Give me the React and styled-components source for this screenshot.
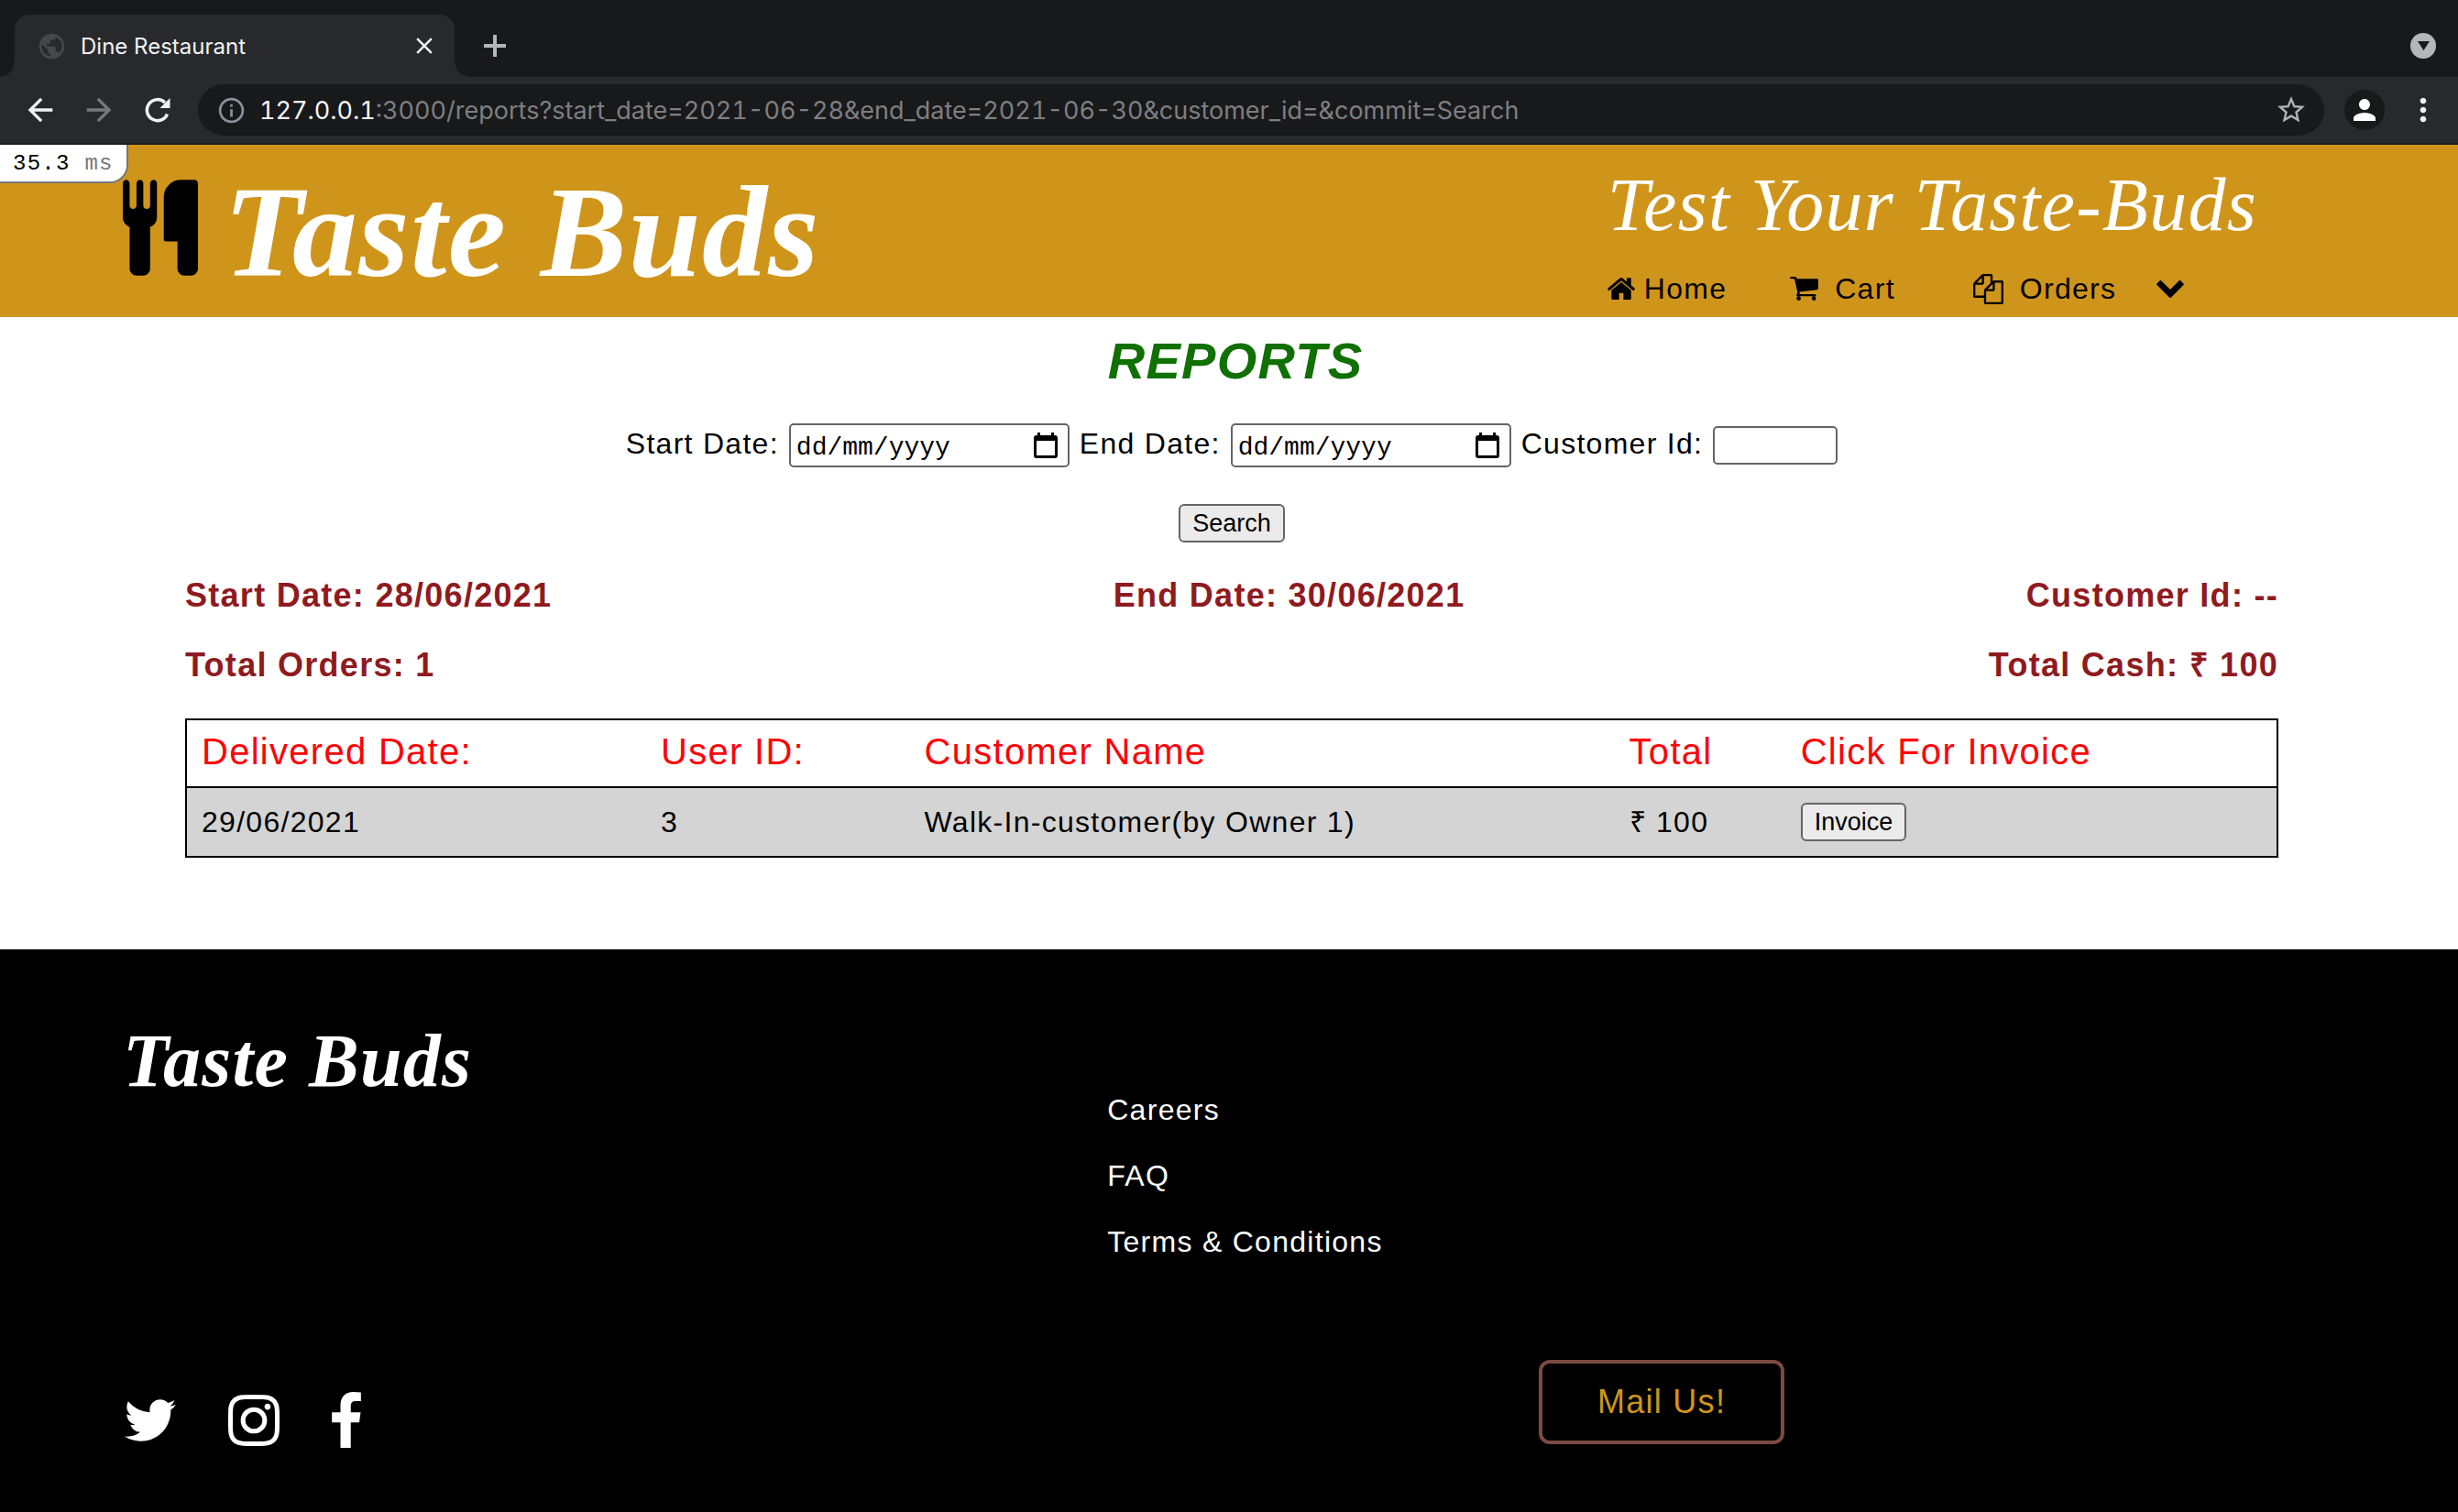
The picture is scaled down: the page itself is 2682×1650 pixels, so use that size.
import React from "react";
import styled, { createGlobalStyle } from "styled-components";
import {
  MdArrowBack,
  MdArrowForward,
  MdClose,
  MdInfoOutline,
  MdMoreVert,
  MdPerson,
  MdPublic,
  MdStarBorder,
} from "react-icons/md";

const colors = {
  strip: "#18191b",
  toolbar: "#28292d",
  brand: "#cf951b",
  maroon: "#8f1a20",
  green: "#107003",
  red: "#ff0008",
  control: "#656567",
  controlFill: "#ebebeb",
  stripe: "#d4d4d4",
  mail: "#7c4a42",
};

const sans = '"Liberation Sans", Arial, Helvetica, sans-serif';
const mono = '"Liberation Mono", "Courier New", monospace';
const script = '"Liberation Serif", "Times New Roman", serif';
const ui = 'Inter, Roboto, sans-serif';

const GlobalStyle = createGlobalStyle`
  *, *::before, *::after { box-sizing: border-box; }
  body { margin: 0; background: #fff; color: #000; font-family: ${sans}; font-size: 32px; }
  h1, h2, p, ul { margin: 0; padding: 0; }
  svg { display: block; flex: none; }
`;

const Window = styled.div`
  display: flex;
  flex-direction: column;
  min-height: 100vh;
`;

/* ---------- browser frame ---------- */

const TabStrip = styled.div`
  display: flex;
  align-items: center;
  padding: 16px 24px 0 16px;
  background: ${colors.strip};
`;

const Tab = styled.div`
  position: relative;
  display: flex;
  align-items: center;
  gap: 15px;
  width: 480px;
  height: 68px;
  padding: 0 18px 0 24px;
  border-radius: 16px 16px 0 0;
  background: ${colors.toolbar};
  color: #f1f1f2;
  font: 400 24px ${ui};

  &::before,
  &::after {
    content: "";
    position: absolute;
    bottom: 0;
    width: 16px;
    height: 16px;
  }
  &::before {
    right: 100%;
    background: radial-gradient(circle at 0 0, transparent 15px, ${colors.toolbar} 16px);
  }
  &::after {
    left: 100%;
    background: radial-gradient(circle at 100% 0, transparent 15px, ${colors.toolbar} 16px);
  }
`;

const TabTitle = styled.span`
  flex: 1;
`;

const IconButton = styled.button`
  display: flex;
  align-items: center;
  justify-content: center;
  width: ${(p) => p.$size || 32}px;
  height: ${(p) => p.$size || 32}px;
  flex: none;
  padding: 0;
  border: 0;
  border-radius: 50%;
  background: ${(p) => p.$fill || "transparent"};
  color: ${(p) => p.$color || "#f1f1f2"};
`;

const NewTab = styled(IconButton)`
  margin-left: 28px;
`;

const TabSearch = styled(IconButton)`
  margin-left: auto;
`;

const Toolbar = styled.div`
  display: flex;
  align-items: center;
  gap: 22px;
  padding: 8px 18px 8px 24px;
  border-bottom: 2px solid #1c1d1f;
  background: ${colors.toolbar};
`;

const NavButtons = styled.div`
  display: flex;
  gap: 24px;
  padding-right: 2px;
`;

const Omnibox = styled.div`
  display: flex;
  align-items: center;
  flex: 1;
  gap: 14px;
  height: 56px;
  padding: 0 18px 0 20px;
  border-radius: 28px;
  background: ${colors.strip};
  color: #7e7f81;
  font: 400 27px ${ui};
  font-variant-numeric: tabular-nums;
`;

const Url = styled.span`
  flex: 1;
  white-space: nowrap;
`;

const Host = styled.span`
  color: #f5f5f6;
`;

/* ---------- page ---------- */

const Page = styled.div`
  position: relative;
  display: flex;
  flex: 1;
  flex-direction: column;
  letter-spacing: 0.04em;
`;

const ProfilerBadge = styled.div`
  position: absolute;
  top: 0;
  left: 0;
  padding: 6px 14px 4px;
  border: solid #777;
  border-width: 0 2px 2px 0;
  border-radius: 0 0 20px 0;
  background: #fff;
  font: 24px/30px ${mono};
`;

const Unit = styled.span`
  color: #777;
`;

const Header = styled.header`
  display: grid;
  grid-template-columns: 67.1% 1fr;
  padding: 0 5%;
  background: ${colors.brand};
`;

const Brand = styled.a`
  display: flex;
  align-items: baseline;
  gap: 28px;
  padding-top: 15px;
  color: #fff;
  text-decoration: none;
`;

const Wordmark = styled.span`
  font: italic 700 ${(p) => p.$size}px/${(p) => p.$line}px ${script};
  color: #fff;
  white-space: nowrap;
`;

const HeaderSide = styled.div`
  display: flex;
  flex-direction: column;
  gap: 27px;
  padding: 20px 0 13px;
`;

const Tagline = styled.p`
  color: #fff;
  font: italic 400 82px/92px ${script};
  white-space: nowrap;
`;

const Nav = styled.nav`
  display: flex;
  align-items: center;
`;

const NavLink = styled.a`
  display: flex;
  align-items: center;
  gap: ${(p) => p.$gap}px;
  margin-right: ${(p) => p.$after}px;
  color: #000;
  line-height: 36px;
  text-decoration: none;
`;

const Main = styled.main`
  display: flex;
  flex-direction: column;
  padding: 16px 196px 100px 202px;
`;

const Title = styled.h1`
  padding-left: 8px;
  color: ${colors.green};
  font: italic 700 56px/64px ${sans};
  text-align: center;
`;

const SearchForm = styled.form`
  display: flex;
  flex-direction: column;
  align-items: center;
  gap: 40px;
  margin: 36px 0;
`;

const Fields = styled.div`
  display: flex;
  align-items: center;
  gap: 11px;
`;

const Label = styled.label`
  padding-bottom: 4px;
  line-height: 36px;
`;

const DateBox = styled.div`
  display: flex;
  align-items: center;
  width: 306px;
  height: 48px;
  padding: 0 10px 0 6px;
  border: 2px solid ${colors.control};
  border-radius: 5px;
`;

const DateInput = styled.input`
  flex: 1;
  min-width: 0;
  padding: 4px 0 0;
  border: 0;
  outline: 0;
  background: transparent;
  font: 28px ${mono};
  &::placeholder {
    color: #000;
    opacity: 1;
  }
`;

const CustomerInput = styled.input`
  width: 136px;
  height: 42px;
  padding: 0 4px;
  border: 2px solid ${colors.control};
  border-radius: 5px;
  font: 27px ${sans};
`;

const Button = styled.button`
  height: 42px;
  padding: 0 13px;
  border: 2px solid ${colors.control};
  border-radius: 6px;
  background: ${colors.controlFill};
  color: #000;
  font: 27px ${sans};
`;

const Summary = styled.div`
  display: flex;
  justify-content: space-between;
  margin-bottom: ${(p) => p.$after}px;
  color: ${colors.maroon};
  font-weight: 700;
  font-size: 36px;
  line-height: 44px;
`;

const Table = styled.table`
  width: 100%;
  table-layout: fixed;
  border: 2px solid #000;
  border-collapse: collapse;
`;

const HeadCell = styled.th`
  height: 74px;
  padding: 0 16px 4px;
  border-bottom: 2px solid #000;
  color: ${colors.red};
  font-weight: 400;
  font-size: 40px;
  text-align: left;
`;

const Cell = styled.td`
  height: 76px;
  padding: 0 16px;
  background: ${colors.stripe};
  line-height: 36px;
`;

const Footer = styled.footer`
  flex: 1;
  padding: 74px 5% 70px;
  background: #000;
`;

const FooterRow = styled.div`
  display: grid;
  grid-template-columns: ${(p) => p.$lead} 1fr;
  align-items: ${(p) => p.$align || "start"};
`;

const Links = styled.ul`
  display: flex;
  flex-direction: column;
  gap: 32px;
  padding: 81px 0 109px;
  list-style: none;
`;

const FooterLink = styled.a`
  display: block;
  color: #fff;
  line-height: 40px;
  text-decoration: none;
`;

const Social = styled.div`
  display: flex;
  align-items: center;
  gap: 57px;
  padding-left: 2px;
`;

const SocialLink = styled.a`
  color: #fff;
`;

const MailLink = styled.a`
  justify-self: start;
  margin-bottom: 4px;
  padding: 22px 60px;
  border: 4px solid ${colors.mail};
  border-radius: 12px;
  color: ${colors.brand};
  font-size: 36px;
  line-height: 40px;
  text-decoration: none;
`;

/* ---------- icons ---------- */

const glyphs = {
  cutlery: {
    box: "192 0 1408 1792",
    w: 82,
    h: 105,
    d: "M832 64v640q0 61-35.5 111t-92.5 70v779q0 52-38 90t-90 38h-128q-52 0-90-38t-38-90v-779q-57-20-92.5-70t-35.5-111v-640q0-26 19-45t45-19 45 19 19 45v416q0 26 19 45t45 19 45-19 19-45v-416q0-26 19-45t45-19 45 19 19 45v416q0 26 19 45t45 19 45-19 19-45v-416q0-26 19-45t45-19 45 19 19 45zm768 0v1600q0 52-38 90t-90 38h-128q-52 0-90-38t-38-90v-512h-224q-13 0-22.5-9.5t-9.5-22.5v-800q0-132 94-226t226-94h256q26 0 45 19t19 45z",
  },
  home: {
    box: "89 250 1614 1286",
    w: 30,
    h: 24,
    d: "M1472 992v480q0 26-19 45t-45 19h-384v-384h-256v384h-384q-26 0-45-19t-19-45v-480q0-1 .5-3t.5-3l575-474 575 474q1 2 1 6zm223-69l-62 74q-8 9-21 11h-3q-13 0-21-7l-692-577-692 577q-12 8-24 7-13-2-21-11l-62-74q-8-10-7-23.5t11-21.5l719-599q32-26 76-26t76 26l244 204v-195q0-14 9-23t23-9h192q14 0 23 9t9 23v408l219 182q10 8 11 21.5t-7 23.5z",
  },
  cart: {
    box: "64 256 1664 1408",
    w: 31,
    h: 26,
    d: "M704 1536q0 52-38 90t-90 38-90-38-38-90 38-90 90-38 90 38 38 90zm896 0q0 52-38 90t-90 38-90-38-38-90 38-90 90-38 90 38 38 90zm128-1088v512q0 24-16.5 42.5t-40.5 21.5l-1044 122q13 60 13 70 0 16-24 64h920q26 0 45 19t19 45-19 45-45 19h-1024q-26 0-45-19t-19-45q0-11 8-31.5t16-36 21.5-40 15.5-29.5l-177-823h-204q-26 0-45-19t-19-45 19-45 45-19h256q16 0 28.5 6.5t19.5 15.5 13 24.5 8 26 5.5 29.5 4.5 26h1201q26 0 45 19t19 45z",
  },
  files: {
    box: "0 0 1792 1792",
    w: 33,
    h: 33,
    d: "M1696 384q40 0 68 28t28 68v1216q0 40-28 68t-68 28h-960q-40 0-68-28t-28-68v-288h-544q-40 0-68-28t-28-68v-672q0-40 20-88t48-76l408-408q28-28 76-48t88-20h416q40 0 68 28t28 68v328q68-40 128-40h416zm-544 213l-299 299h299v-299zm-640-384l-299 299h299v-299zm196 647l316-316v-416h-384v416q0 40-28 68t-68 28h-416v640h512v-256q0-40 20-88t48-76zm956 804v-1152h-384v416q0 40-28 68t-68 28h-416v640h896z",
  },
  chevron: {
    box: "90 533 1612 1035",
    w: 30,
    h: 19,
    d: "M1683 808l-742 741q-19 19-45 19t-45-19l-742-741q-19-19-19-45.5t19-45.5l166-165q19-19 45-19t45 19l531 531 531-531q19-19 45-19t45 19l166 165q19 19 19 45.5t-19 45.5z",
  },
  twitter: {
    box: "108 256 1576 1280",
    w: 56,
    h: 46,
    d: "M1684 408q-67 98-162 167 1 14 1 42 0 130-38 259.5t-115.5 248.5-184.5 210.5-258 146-323 54.5q-271 0-496-145 35 4 78 4 225 0 401-138-105-2-188-64.5t-114-159.5q33 5 61 5 43 0 85-11-112-23-185.5-111.5t-73.5-205.5v-4q68 38 146 41-66-44-105-115t-39-154q0-88 44-163 121 149 294.5 238.5t371.5 99.5q-8-38-8-74 0-134 94.5-228.5t228.5-94.5q140 0 236 102 109-21 205-78-37 115-142 178 93-10 186-50z",
  },
  instagram: {
    box: "128 128 1536 1536",
    w: 56,
    h: 56,
    d: "M1152 896q0-106-75-181t-181-75-181 75-75 181 75 181 181 75 181-75 75-181zm138 0q0 164-115 279t-279 115-279-115-115-279 115-279 279-115 279 115 115 279zm108-410q0 38-27 65t-65 27-65-27-27-65 27-65 65-27 65 27 27 65zm-502-220q-7 0-76.5-.5t-105.5 0-96.5 3-103 10-71.5 18.5q-50 20-88 58t-58 88q-11 29-18.5 71.5t-10 103-3 96.5 0 105.5.5 76.5-.5 76.5 0 105.5 3 96.5 10 103 18.5 71.5q20 50 58 88t88 58q29 11 71.5 18.5t103 10 96.5 3 105.5 0 76.5-.5 76.5.5 105.5 0 96.5-3 103-10 71.5-18.5q50-20 88-58t58-88q11-29 18.5-71.5t10-103 3-96.5 0-105.5-.5-76.5.5-76.5 0-105.5-3-96.5-10-103-18.5-71.5q-20-50-58-88t-88-58q-29-11-71.5-18.5t-103-10-96.5-3-105.5 0-76.5.5zm768 630q0 229-5 317-10 208-124 322t-322 124q-88 5-317 5t-317-5q-208-10-322-124t-124-322q-5-88-5-317t5-317q10-208 124-322t322-124q88-5 317-5t317 5q208 10 322 124t124 322q5 88 5 317z",
  },
  facebook: {
    box: "479 0 864 1664",
    w: 32,
    h: 61,
    d: "M1343 12v264h-157q-86 0-116 36t-30 108v189h293l-39 296h-254v759h-306v-759h-255v-296h255v-218q0-186 104-288.5t277-102.5q147 0 228 12z",
  },
};

function Glyph({ name, color = "currentColor" }) {
  const g = glyphs[name];
  return (
    <svg width={g.w} height={g.h} viewBox={g.box} fill={color} aria-hidden="true">
      <path d={g.d} />
    </svg>
  );
}

function PlusIcon() {
  return (
    <svg width="24" height="24" viewBox="0 0 24 24" stroke="currentColor" strokeWidth="4" aria-hidden="true">
      <path d="M12 0v24M0 12h24" />
    </svg>
  );
}

function ReloadIcon() {
  return (
    <svg width="28" height="28" viewBox="0 0 28 28" fill="none" aria-hidden="true">
      <path d="M24.5 18.5A11.5 11.5 0 1 1 22 6" stroke="currentColor" strokeWidth="3.5" />
      <path d="M27.5 1v11h-11z" fill="currentColor" />
    </svg>
  );
}

function TriangleIcon() {
  return (
    <svg width="13" height="10" viewBox="0 0 13 10" fill="currentColor" aria-hidden="true">
      <path d="M0 0h13L6.5 10z" />
    </svg>
  );
}

function CalendarIcon() {
  return (
    <svg width="26" height="28" viewBox="0 0 26 28" aria-hidden="true">
      <path
        fillRule="evenodd"
        d="M4 0h3v3h12V0h3v3h1a3 3 0 0 1 3 3v19a3 3 0 0 1-3 3H3a3 3 0 0 1-3-3V6a3 3 0 0 1 3-3h1zM3 9v16h20V9z"
      />
    </svg>
  );
}

function DateField({ id, label }) {
  return (
    <>
      <Label htmlFor={id}>{label}</Label>
      <DateBox>
        <DateInput id={id} name={id} type="text" placeholder="dd/mm/yyyy" />
        <IconButton type="button" aria-label={`Pick ${label}`} $size={28} $color="#000">
          <CalendarIcon />
        </IconButton>
      </DateBox>
    </>
  );
}

const columns = [
  { title: "Delivered Date:", width: "22%" },
  { title: "User ID:", width: "12.6%" },
  { title: "Customer Name", width: "33.7%" },
  { title: "Total", width: "8.2%" },
  { title: "Click For Invoice", width: "auto" },
];

const orders = [
  { date: "29/06/2021", user: "3", customer: "Walk-In-customer(by Owner 1)", total: "₹ 100" },
];

const footerLinks = ["Careers", "FAQ", "Terms & Conditions"];
const socials = ["twitter", "instagram", "facebook"];

export default function App() {
  return (
    <Window>
      <GlobalStyle />
      <TabStrip>
        <Tab>
          <MdPublic size={33} color="#46474b" />
          <TabTitle>Dine Restaurant</TabTitle>
          <IconButton aria-label="Close tab" $size={30}>
            <MdClose size={30} />
          </IconButton>
        </Tab>
        <NewTab aria-label="New tab" $color="#b4b6ba">
          <PlusIcon />
        </NewTab>
        <TabSearch aria-label="Search tabs" $size={28} $fill="#b4b6ba" $color={colors.strip}>
          <TriangleIcon />
        </TabSearch>
      </TabStrip>
      <Toolbar>
        <NavButtons>
          <IconButton aria-label="Back" $size={40}>
            <MdArrowBack size={40} />
          </IconButton>
          <IconButton aria-label="Forward" $size={40} $color="#77787a">
            <MdArrowForward size={40} />
          </IconButton>
          <IconButton aria-label="Reload" $size={40}>
            <ReloadIcon />
          </IconButton>
        </NavButtons>
        <Omnibox>
          <MdInfoOutline size={33} color="#87909a" />
          <Url>
            <Host>127.0.0.1</Host>
            :3000/reports?start_date=2021-06-28&amp;end_date=2021-06-30&amp;customer_id=&amp;commit=Search
          </Url>
          <IconButton aria-label="Bookmark" $size={36} $color="#b0b1b3">
            <MdStarBorder size={36} />
          </IconButton>
        </Omnibox>
        <IconButton aria-label="Profile" $size={44} $fill={colors.strip} $color="#fff">
          <MdPerson size={36} />
        </IconButton>
        <IconButton aria-label="Menu" $size={40}>
          <MdMoreVert size={40} />
        </IconButton>
      </Toolbar>

      <Page>
        <Header>
          <Brand href="#home">
            <Glyph name="cutlery" color="#000" />
            <Wordmark $size={142} $line={160}>Taste Buds</Wordmark>
          </Brand>
          <HeaderSide>
            <Tagline>Test Your Taste-Buds</Tagline>
            <Nav>
              <NavLink href="#home" $gap={10} $after={69}>
                <Glyph name="home" />
                Home
              </NavLink>
              <NavLink href="#cart" $gap={18} $after={85}>
                <Glyph name="cart" />
                Cart
              </NavLink>
              <NavLink href="#orders" $gap={18} $after={44}>
                <Glyph name="files" />
                Orders
              </NavLink>
              <Glyph name="chevron" />
            </Nav>
          </HeaderSide>
        </Header>
        <ProfilerBadge>
          35.3 <Unit>ms</Unit>
        </ProfilerBadge>

        <Main>
          <Title>REPORTS</Title>
          <SearchForm onSubmit={(e) => e.preventDefault()}>
            <Fields>
              <DateField id="start_date" label="Start Date:" />
              <DateField id="end_date" label="End Date:" />
              <Label htmlFor="customer_id">Customer Id:</Label>
              <CustomerInput id="customer_id" name="customer_id" type="text" />
            </Fields>
            <Button type="submit">Search</Button>
          </SearchForm>

          <Summary $after={32}>
            <span>Start Date: 28/06/2021</span>
            <span>End Date: 30/06/2021</span>
            <span>Customer Id: --</span>
          </Summary>
          <Summary $after={36}>
            <span>Total Orders: 1</span>
            <span>Total Cash: ₹ 100</span>
          </Summary>

          <Table>
            <colgroup>
              {columns.map((c) => (
                <col key={c.title} width={c.width} />
              ))}
            </colgroup>
            <thead>
              <tr>
                {columns.map((c) => (
                  <HeadCell key={c.title} scope="col">{c.title}</HeadCell>
                ))}
              </tr>
            </thead>
            <tbody>
              {orders.map((o) => (
                <tr key={o.date}>
                  <Cell>{o.date}</Cell>
                  <Cell>{o.user}</Cell>
                  <Cell>{o.customer}</Cell>
                  <Cell>{o.total}</Cell>
                  <Cell>
                    <Button type="button">Invoice</Button>
                  </Cell>
                </tr>
              ))}
            </tbody>
          </Table>
        </Main>

        <Footer>
          <FooterRow $lead="44.5%">
            <Wordmark $size={82} $line={96}>Taste Buds</Wordmark>
            <Links>
              {footerLinks.map((text) => (
                <li key={text}>
                  <FooterLink href="#info">{text}</FooterLink>
                </li>
              ))}
            </Links>
          </FooterRow>
          <FooterRow $lead="64%" $align="end">
            <Social>
              {socials.map((name) => (
                <SocialLink key={name} href={`#${name}`} aria-label={name}>
                  <Glyph name={name} />
                </SocialLink>
              ))}
            </Social>
            <MailLink href="#mail">Mail Us!</MailLink>
          </FooterRow>
        </Footer>
      </Page>
    </Window>
  );
}
